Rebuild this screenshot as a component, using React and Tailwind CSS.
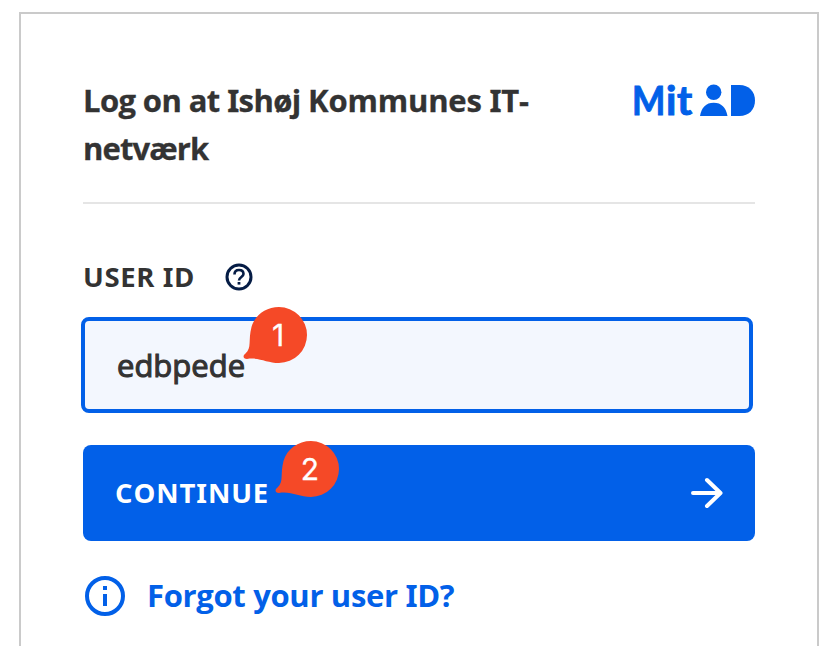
import React from "react";

const base = "font-['Open_Sans','Noto_Sans',sans-serif]";

// Capital I with slab serifs
function I() {
  return <span className="font-['Noto_Sans',sans-serif]">I</span>;
}

function Logo() {
  return (
    <div className="flex h-10 w-[126px] text-[#0260e8]">
      <span className="-mt-[5px] flex w-[68px] pl-[2px] font-['Lato',sans-serif] text-[41px] leading-[48px] font-bold [-webkit-text-stroke:1px_#0260e8]">
        <span className="w-[34px] origin-left scale-x-[0.86]">M</span>
        <span className="w-[11px]">i</span>
        <span className="w-4">t</span>
      </span>
      <svg width="58" height="40" viewBox="68 0 58 40" className="shrink-0" fill="currentColor">
        <circle cx="83.7" cy="11.3" r="7.7" />
        <path d="M70 35C71.5 26.5 76 21.8 83.7 21.8S95.900 26.500 97.500 35Z" />
        <path d="M101 4H109.500C119 4 125 10.500 125 19.500S119 35 109.500 35H101Z" />
      </svg>
    </div>
  );
}

function Badge({ n, className }) {
  return (
    <span className={"absolute h-[58px] w-[66px] " + className}>
      <svg width="66" height="58" viewBox="0 0 66 58" className="absolute inset-0" fill="#f54927">
        <path d="M36 1A28 28 0 1 1 36 57C24 57 16 51 4 53C0 53-.5 49.500 2.500 47.500C9 42 5 34 8.500 21C12 9 23 1 36 1Z" />
      </svg>
      <span className="absolute top-[10px] left-[7px] w-14 text-center font-['Inter',sans-serif] text-[30px] leading-[38px] font-normal tracking-normal text-white [-webkit-text-stroke:0.3px_white]">{n}</span>
    </span>
  );
}

export default function App() {
  return (
    <main className={"h-[646px] w-[834px] overflow-hidden bg-white pt-3 pl-[19px] text-[#333333] " + base}>
      <section className="h-[700px] w-[800px] border-2 border-[#cacaca] px-[62px] pt-[62px]">
        <header className="flex h-32 items-start justify-between border-b-2 border-[#e5e5e5]">
          <h1 className="text-[31px] leading-[48px] font-bold tracking-[-0.6px] whitespace-nowrap [-webkit-text-stroke:0.3px_#333333]">
            Log on at <I />shøj <span className="tracking-[-0.2px]">Kommunes <I />T-</span><br /><span className="tracking-[-0.9px]">netværk</span>
          </h1>
          <div className="-mr-px pt-[5px]"><Logo /></div>
        </header>

        <div className="flex h-[113px] items-center pt-8">
          <label className="w-[142px] text-[27.5px] leading-[40px] font-bold tracking-[0.6px] whitespace-nowrap">USER <I />D</label>
          <svg width="28" height="28" viewBox="0 0 28 28" fill="none" stroke="#051c45" strokeWidth="3">
            <circle cx="14" cy="14" r="12" />
            <path d="M9.500 11.500C9.500 8.500 11.300 7 14 7S18.500 8.600 18.500 11C18.500 14 14 14 14 17.500" strokeWidth="2.600" />
            <path d="M12.600 19H15.400V21.600H12.600Z" fill="#051c45" stroke="none" />
          </svg>
        </div>

        <div className="relative -ml-[2px] flex h-24 w-[672px] items-center rounded-lg border-4 border-[#0260e8] bg-[#f3f7fe] pl-8">
          <span className="text-[31px] leading-[48px] font-medium [-webkit-text-stroke:1.1px_#333333]">edbpede</span>
          <Badge n="1" className="top-[-15px] left-[158px]" />
        </div>

        <button className="relative mt-8 flex h-24 w-full items-center justify-between rounded-lg bg-[#0260e8] pr-8 pl-8 text-white">
          <span className="text-[27.5px] leading-[40px] font-bold tracking-[0.9px]">CONT<I />NUE</span>
          <svg width="32" height="32" viewBox="0 0 32 32" fill="none" stroke="white" strokeWidth="4" strokeLinecap="round" strokeLinejoin="round">
            <path d="M2 16H29M16 3L29.500 16L16 29" />
          </svg>
          <Badge n="2" className="top-[-5px] left-[192px]" />
        </button>

        <a className="mt-[31px] flex items-center pl-[2px] text-[#0260e8]">
          <svg width="40" height="40" viewBox="0 0 40 40" fill="none" stroke="currentColor" strokeWidth="4">
            <circle cx="20" cy="20" r="18" />
            <path d="M20 10V14M20 18V30" />
          </svg>
          <span className="mb-[2px] ml-[22px] text-[31px] leading-[46px] font-bold tracking-[-0.33px] whitespace-nowrap">Forgot your user <I />D?</span>
        </a>
      </section>
    </main>
  );
}
